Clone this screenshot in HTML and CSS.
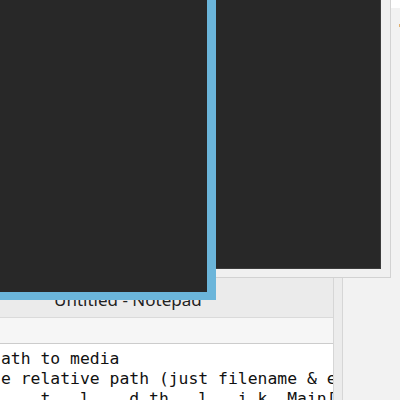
FILE: index.html
```html
<!DOCTYPE html>
<html>
<head>
<meta charset="utf-8">
<link rel="stylesheet" href="styles.css">
</head>
<body>
<div class="desktop">
  <div class="back-window">
    <div class="back-head"></div>
    <div class="back-dot"></div>
  </div>

  <div class="notepad">
    <div class="np-main">
      <div class="np-title">Untitled - Notepad</div>
      <div class="np-menu"></div>
      <div class="np-edit"><pre class="np-text">ath to media
e relative path (just filename &amp; extension)
    t   l    d th   l   i k  Main[</pre></div>
    </div>
    <div class="np-frame"></div>
  </div>

  <div class="win2">
    <div class="win2-body"></div>
  </div>

  <div class="win1"></div>
</div>
</body>
</html>
```

FILE: styles.css
```css
html, body {
  margin: 0;
  padding: 0;
}

body {
  width: 400px;
  height: 400px;
  overflow: hidden;
  background: #f2f2f2;
}

.desktop {
  position: relative;
  width: 400px;
  height: 400px;
  overflow: hidden;
}

.back-window {
  position: absolute;
  left: 343px;
  top: 0;
  right: 0;
  bottom: 0;
  background: #f2f2f2;
}

.back-head {
  height: 8px;
  background: #ffffff;
}

.back-dot {
  position: absolute;
  right: 0;
  top: 24px;
  width: 1px;
  height: 3px;
  background: #e0b070;
}

.notepad {
  position: absolute;
  left: 0;
  top: 278px;
  width: 343px;
  height: 140px;
  display: flex;
}

.np-main {
  flex: 1;
  display: flex;
  flex-direction: column;
  min-width: 0;
}

.np-title {
  height: 39px;
  box-sizing: border-box;
  padding: 10px 0 0 54px;
  background: #ebebeb;
  font-family: "Noto Sans", "Open Sans", sans-serif;
  font-size: 17px;
  line-height: 23px;
  color: #222222;
  white-space: nowrap;
}

.np-menu {
  height: 25px;
  border-top: 1px solid #dadada;
  border-bottom: 1px solid #cccccc;
  background: #f6f6f6;
}

.np-edit {
  flex: 1;
  background: #ffffff;
  overflow: hidden;
  padding: 5px 0 0 1px;
}

.np-text {
  margin: 0;
  font-family: "DejaVu Sans Mono", "Liberation Mono", monospace;
  font-size: 16.4px;
  line-height: 20px;
  color: #111111;
  white-space: pre;
}

.np-frame {
  width: 8px;
  border-left: 1px solid #d6d6d6;
  border-right: 1px solid #d6d6d6;
  background: #ececec;
}

.win2 {
  position: absolute;
  left: 150px;
  top: -10px;
  width: 241px;
  height: 288px;
  box-sizing: border-box;
  border: 1px solid #d2d2d2;
  background: #f0f0f0;
  padding: 0 9px 8px 0;
  display: flex;
}

.win2-body {
  flex: 1;
  background: #282828;
  border-right: 1px solid #3c3c3c;
  border-bottom: 1px solid #3c3c3c;
}

.win1 {
  position: absolute;
  left: -20px;
  top: -20px;
  width: 236px;
  height: 320px;
  box-sizing: border-box;
  background: #282828;
  border-right: 9px solid #6bb5da;
  border-bottom: 8px solid #6bb5da;
}
```
